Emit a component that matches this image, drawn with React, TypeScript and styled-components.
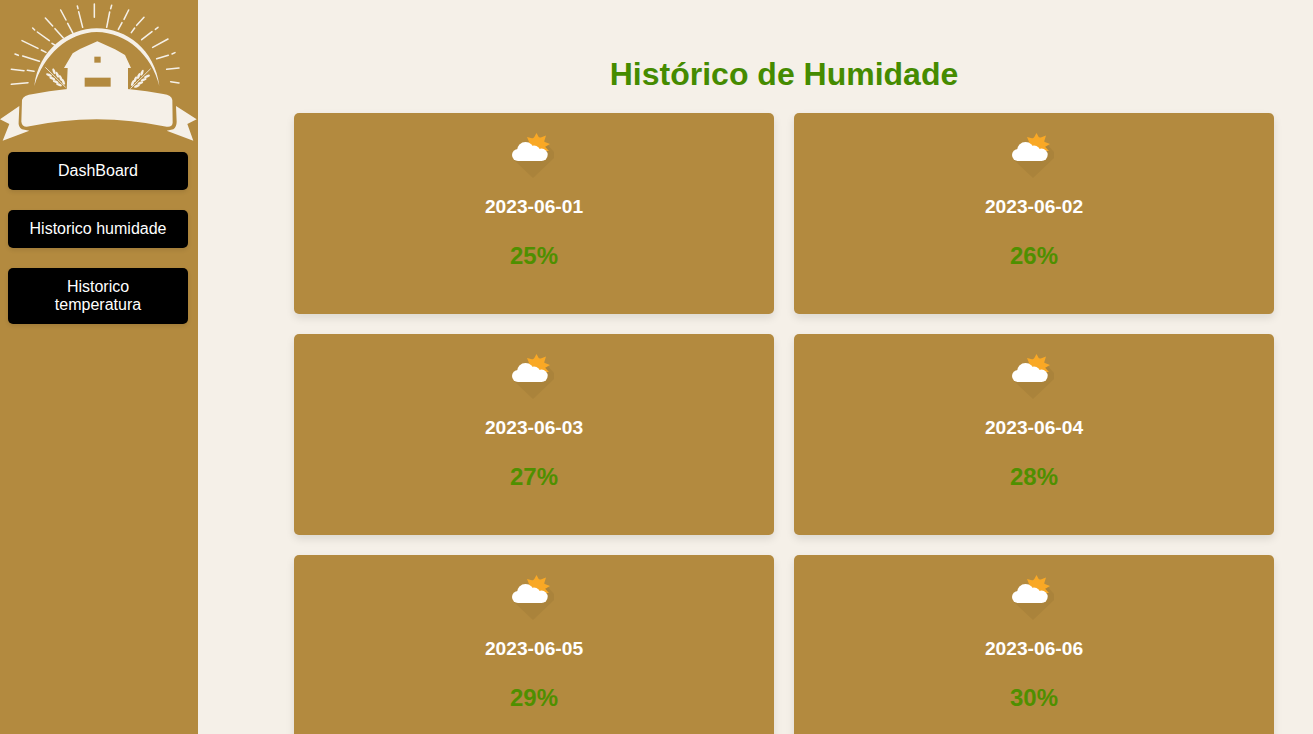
import styled, { createGlobalStyle } from "styled-components"

const GlobalStyle = createGlobalStyle`
  html, body {
    margin: 0;
    height: 100%;
    overflow: hidden;
  }

  body {
    font-family: "Liberation Sans", Arial, sans-serif;
    background: #f5f0e8;
  }
`

const Page = styled.div`
  display: flex;
  height: 100vh;
  overflow: hidden;
`

const Sidebar = styled.aside`
  flex: 0 0 198px;
  display: flex;
  flex-direction: column;
  background: #b38a3f;
`

const Logo = styled.svg`
  display: block;
  width: 198px;
  height: 145px;
`

const Nav = styled.nav`
  display: flex;
  flex-direction: column;
  gap: 20px;
  padding: 7px 10px 0 8px;
`

const NavButton = styled.a`
  display: block;
  padding: 10px 20px;
  border-radius: 5px;
  background: #000;
  color: #fff;
  font-size: 16px;
  line-height: 18px;
  text-align: center;
  box-shadow: 0 2px 4px rgba(0, 0, 0, 0.1);
`

const Main = styled.main`
  flex: 1;
  padding: 56px 39px 0 96px;
`

const Title = styled.h1`
  margin: 0 0 20px;
  color: #458b00;
  font-size: 32px;
  line-height: 37px;
  font-weight: 700;
  text-align: center;
`

const Grid = styled.div`
  display: grid;
  grid-template-columns: repeat(2, 480px);
  gap: 20px;
`

const Card = styled.article`
  display: flex;
  flex-direction: column;
  align-items: center;
  height: 201px;
  box-sizing: border-box;
  padding-top: 17px;
  border-radius: 5px;
  background: #b38a3f;
  box-shadow: 0 4px 8px rgba(0, 0, 0, 0.1);
`

const DateLabel = styled.div`
  margin-top: 16px;
  color: #fff;
  font-size: 19.2px;
  line-height: 22px;
  font-weight: 700;
`

const Percent = styled.div`
  margin-top: 24px;
  color: #4f8f00;
  font-size: 24px;
  line-height: 27px;
  font-weight: 700;
`

const readings = [
  { date: "2023-06-01", value: 25 },
  { date: "2023-06-02", value: 26 },
  { date: "2023-06-03", value: 27 },
  { date: "2023-06-04", value: 28 },
  { date: "2023-06-05", value: 29 },
  { date: "2023-06-06", value: 30 },
]

const rays = [
  [283, 12, 283, 52], [232, 18, 234, 26], [236, 35, 248, 82], [335, 16, 332, 26],
  [329, 36, 320, 82], [182, 30, 198, 60], [203, 70, 219, 100], [386, 30, 372, 58],
  [366, 68, 355, 88], [136, 54, 158, 78], [165, 86, 190, 114], [432, 52, 410, 76],
  [404, 84, 394, 98], [98, 84, 104, 90], [112, 96, 148, 122], [474, 82, 466, 88],
  [456, 95, 425, 119], [66, 122, 114, 145], [124, 150, 138, 157], [504, 117, 458, 142],
  [156, 130, 164, 135], [45, 162, 55, 166], [68, 168, 118, 184], [525, 158, 516, 162],
  [505, 166, 470, 176], [34, 208, 72, 212], [82, 211, 102, 214], [537, 204, 500, 208],
  [34, 253, 84, 248], [512, 245, 537, 249],
]

// x, y, rotation of each grain on the stalk
const wheatLeaves = [
  [147, 225, 22], [157, 235, 22], [167, 245, 22], [177, 254, 22],
  [162, 214, 68], [172, 224, 68], [182, 234, 68], [190, 245, 68],
]

function Wheat() {
  return (
    <g fill="#f5f0e8">
      <path d="M136 202 L197 262" stroke="#f5f0e8" strokeWidth="2.5" />
      {wheatLeaves.map(([x, y, angle]) => (
        <ellipse key={`${x}-${y}`} cx={x} cy={y} rx="9.5" ry="3.8" transform={`rotate(${angle} ${x} ${y})`} />
      ))}
    </g>
  )
}

function FarmLogo() {
  return (
    <Logo viewBox="0 0 594 435">
      <g stroke="#f5f0e8" strokeWidth="4.6" strokeLinecap="round">
        {rays.map(([x1, y1, x2, y2]) => (
          <line key={`${x1}-${y1}`} x1={x1} y1={y1} x2={x2} y2={y2} />
        ))}
      </g>
      <g fill="#f5f0e8">
        <path d="M103 258 C115 150 205 85 290 85 C380 85 465 150 478 258 C455 165 380 97 290 96 C205 97 130 165 103 258 Z" />
        <path d="M292 124 L345 148 L375 165 L393 204 L384 204 L384 270 L200 270 L203 204 L192 204 L218 160 L240 147 Z" />
        <path d="M66 300 Q70 285 100 282 Q290 245 490 282 Q515 285 517 300 L518 368 Q517 382 500 380 Q290 335 80 380 Q66 380 64 365 Z" />
        <path d="M58 318 L0 358 L28 372 L8 422 L88 392 L66 388 Q54 380 56 365 Z" />
        <path d="M528 318 L590 358 L562 372 L580 422 L500 392 L520 388 Q530 380 530 365 Z" />
      </g>
      <rect x="283" y="170" width="19" height="18" fill="#b38a3f" />
      <rect x="254" y="233" width="78" height="27" fill="#b38a3f" />
      <Wheat />
      <g transform="translate(588 4) scale(-1 1)">
        <Wheat />
      </g>
    </Logo>
  )
}

function WeatherIcon() {
  return (
    <svg width="50" height="50" viewBox="9 5 50 50">
      <path d="M14 35 L33 53 L54 33 L54 27 L46 18 L30 22 Z" fill="#aa833b" />
      <g fill="#f9a825">
        <circle cx="37" cy="20" r="8" />
        <path d="M36.5 8 L39.5 13.5 L33.5 13.5 Z M27 12 L33 13.5 L29.5 18 Z M46 10.5 L44 17 L39.5 13 Z M50 19 L44 22.5 L43.5 16.5 Z M49 26 L42 26 L44 20.5 Z" />
      </g>
      <g fill="#fff">
        <circle cx="25.5" cy="25.5" r="8.5" />
        <circle cx="18" cy="30" r="6" />
        <circle cx="41.5" cy="29.8" r="6.2" />
        <circle cx="34" cy="27" r="6.5" />
        <rect x="18" y="29" width="24" height="7" />
      </g>
    </svg>
  )
}

export default function App() {
  return (
    <Page>
      <GlobalStyle />
      <Sidebar>
        <FarmLogo />
        <Nav>
          <NavButton>DashBoard</NavButton>
          <NavButton>Historico humidade</NavButton>
          <NavButton>Historico temperatura</NavButton>
        </Nav>
      </Sidebar>
      <Main>
        <Title>Histórico de Humidade</Title>
        <Grid>
          {readings.map((r) => (
            <Card key={r.date}>
              <WeatherIcon />
              <DateLabel>{r.date}</DateLabel>
              <Percent>{r.value}%</Percent>
            </Card>
          ))}
        </Grid>
      </Main>
    </Page>
  )
}
